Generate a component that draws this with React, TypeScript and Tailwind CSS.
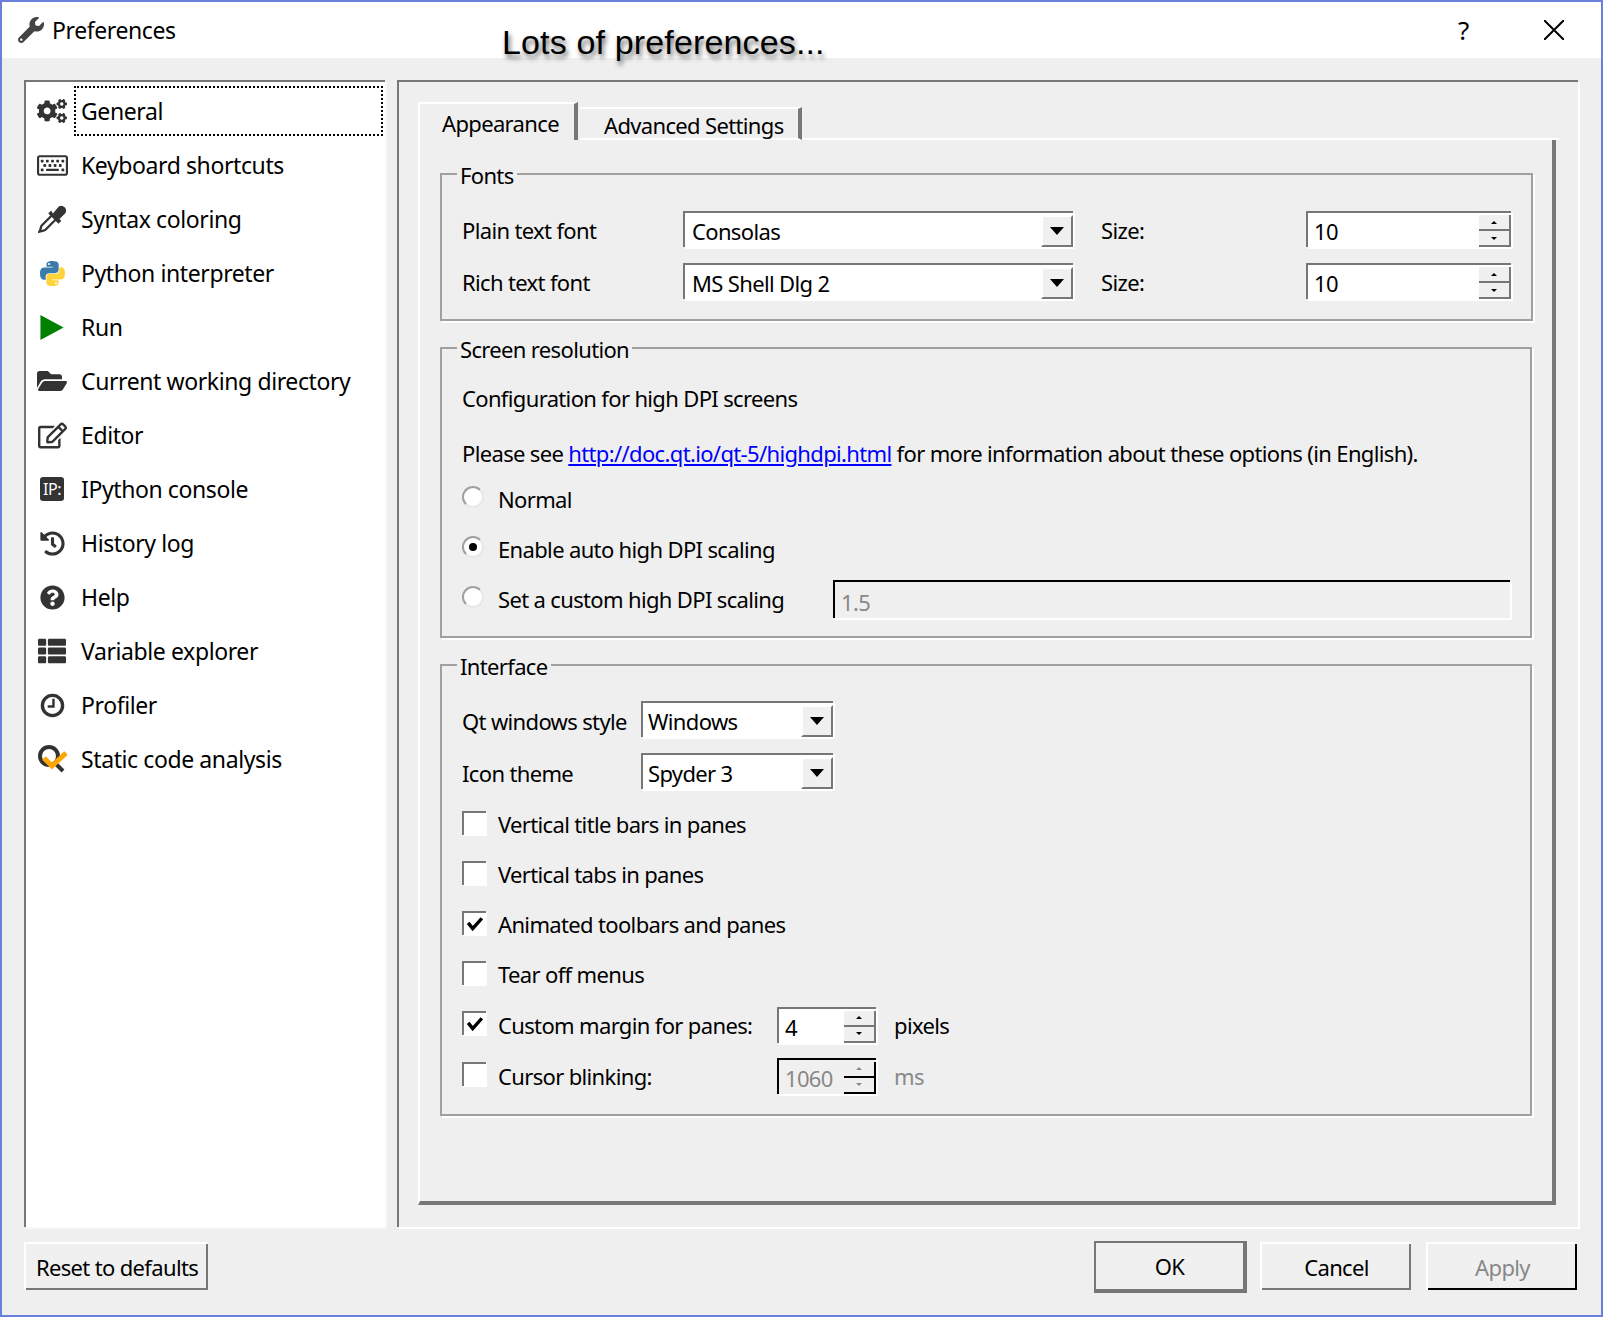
import type { ReactNode } from "react";
import {
  FaCogs,
  FaFolderOpen,
  FaHistory,
  FaQuestionCircle,
  FaRegEdit,
  FaRegKeyboard,
  FaThList,
  FaWrench,
} from "react-icons/fa";

function PythonIcon() {
  const d =
    "M54.9 0C26.9 0 28.6 12.2 28.6 12.2v12.6h26.7v3.8H18C18 28.6 0 26.5 0 54.9c0 28.4 15.7 27.4 15.7 27.4h9.4V69.1s-.5-15.7 15.4-15.7h26.6s14.9.2 14.9-14.4V14.8S84.3 0 54.9 0zM40.1 8.5a4.8 4.8 0 110 9.6 4.8 4.8 0 010-9.6z";
  return (
    <svg viewBox="0 0 110 110" className="h-[25px] w-[25px]">
      <path d={d} fill="#3d7bab" />
      <path d={d} fill="#ffd43b" transform="rotate(180 55 55)" />
    </svg>
  );
}

function RunIcon() {
  return (
    <svg viewBox="0 0 24 26" className="h-[25px] w-[24px]">
      <polygon points="0,0 24,13 0,26" fill="#008000" />
    </svg>
  );
}

function DropperIcon() {
  return (
    <svg viewBox="0 0 30 30" className="h-[28px] w-[28px]">
      <path d="M16 9l6-7a5 5 0 017 7l-6 6 2 2-3 3L11 9l3-3z" fill="#333" />
      <path d="M15 11L4 22c-1 1-1 3-1.500 4.500L1.500 28.500 3.500 28c1.500-.5 3.500-.5 4.500-1.500L19 15.500" fill="none" stroke="#333" strokeWidth="2.500" />
    </svg>
  );
}

function ClockIcon() {
  return (
    <svg viewBox="0 0 26 26" className="h-[25px] w-[25px]">
      <circle cx="13" cy="13" r="10.500" fill="none" stroke="#333" strokeWidth="3.500" />
      <path d="M14 6v8H8" fill="none" stroke="#333" strokeWidth="2.500" />
    </svg>
  );
}

function IPythonIcon() {
  return (
    <span className="flex h-[24px] w-[24px] items-center justify-center rounded-[3px] bg-[#333] text-[16px] leading-none tracking-[-0.5px] text-white">
      IP:
    </span>
  );
}

function AnalysisIcon() {
  return (
    <svg viewBox="0 0 30 28" className="h-[28px] w-[30px]">
      <circle cx="12" cy="11" r="9" fill="none" stroke="#333" strokeWidth="4" />
      <path d="M18 18l8 8" stroke="#333" strokeWidth="4" />
      <path d="M7 13l8 8L29 8" fill="none" stroke="#ffa500" strokeWidth="5" />
    </svg>
  );
}

const iconCls = "text-[#333]";

const pages: { label: string; icon: ReactNode }[] = [
  { label: "General", icon: <FaCogs size={30} className={iconCls} /> },
  { label: "Keyboard shortcuts", icon: <FaRegKeyboard size={31} className={iconCls} /> },
  { label: "Syntax coloring", icon: <DropperIcon /> },
  { label: "Python interpreter", icon: <PythonIcon /> },
  { label: "Run", icon: <RunIcon /> },
  { label: "Current working directory", icon: <FaFolderOpen size={30} className={iconCls} /> },
  { label: "Editor", icon: <FaRegEdit size={29} className={iconCls} /> },
  { label: "IPython console", icon: <IPythonIcon /> },
  { label: "History log", icon: <FaHistory size={25} className={iconCls} /> },
  { label: "Help", icon: <FaQuestionCircle size={25} className={iconCls} /> },
  { label: "Variable explorer", icon: <FaThList size={28} className={iconCls} /> },
  { label: "Profiler", icon: <ClockIcon /> },
  { label: "Static code analysis", icon: <AnalysisIcon /> },
];

function Combo({ value, width, pad }: { value: string; width: string; pad: string }) {
  return (
    <div
      className={`flex h-[36px] items-center justify-between border-t-2 border-l-2 border-[#777] bg-white shadow-[2px_2px_0_#fff] ${width}`}
    >
      <span className={`pt-[2px] ${pad}`}>{value}</span>
      <span className="flex h-[32px] w-[32px] items-center justify-center self-end border-2 border-[#777] border-t-white border-l-white bg-[#f0f0f0]">
        <span className="h-0 w-0 border-x-[7px] border-t-[8px] border-x-transparent border-t-black" />
      </span>
    </div>
  );
}

function Spin({
  value,
  width,
  disabled = false,
  pad = "pl-[6px]",
}: {
  value: string;
  width: string;
  disabled?: boolean;
  pad?: string;
}) {
  const line = disabled ? "border-black" : "border-[#777]";
  const arrow = disabled ? "border-b-[#888]" : "border-b-black";
  const arrowDown = disabled ? "border-t-[#888]" : "border-t-black";
  return (
    <div
      className={`flex h-[36px] items-center justify-between border-t-2 border-l-2 ${line} ${
        disabled ? "bg-[#f0f0f0] text-[#888]" : "bg-white"
      } shadow-[2px_2px_0_#fff] ${width}`}
    >
      <span className={`pt-[2px] ${pad}`}>{value}</span>
      <span className={`flex h-[32px] w-[32px] flex-col self-end border-r-2 border-b-2 ${line}`}>
        <span className={`flex flex-1 items-center justify-center border-b-2 ${line} bg-[#f0f0f0]`}>
          <span className={`h-0 w-0 border-x-[3px] border-b-[3px] border-x-transparent ${arrow}`} />
        </span>
        <span className="flex flex-1 items-center justify-center bg-[#f0f0f0]">
          <span className={`h-0 w-0 border-x-[3px] border-t-[3px] border-x-transparent ${arrowDown}`} />
        </span>
      </span>
    </div>
  );
}

function Radio({ checked = false }: { checked?: boolean }) {
  return (
    <span className="mb-[4px] flex h-[22px] w-[22px] items-center justify-center rounded-full border-2 border-[#a0a0a0] border-r-[#e8e8e8] border-b-[#e8e8e8] bg-white">
      {checked && <span className="h-[8px] w-[8px] rounded-full bg-black" />}
    </span>
  );
}

function Check({ checked = false }: { checked?: boolean }) {
  return (
    <span className="mb-[3px] flex h-[24px] w-[24px] items-center justify-center border-t-2 border-l-2 border-[#777] bg-white shadow-[1px_1px_0_#fff]">
      {checked && (
        <svg viewBox="0 0 14 12" className="h-[14px] w-[16px]">
          <path d="M1 5l4 5 8-9" fill="none" stroke="black" strokeWidth="3" />
        </svg>
      )}
    </span>
  );
}

function Group({ title, className, children }: { title: string; className: string; children: ReactNode }) {
  return (
    <fieldset className={`border-2 border-[#a0a0a0] px-[20px] shadow-[2px_2px_0_#fff] ${className}`}>
      <legend className="ml-[-5px] translate-y-[1px] px-[3px] leading-[28px]">{title}</legend>
      {children}
    </fieldset>
  );
}

function CheckRow({ label, checked = false }: { label: string; checked?: boolean }) {
  return (
    <div className="flex h-[50px] items-center gap-[12px]">
      <Check checked={checked} />
      <span>{label}</span>
    </div>
  );
}

function RadioRow({ label, checked = false, children }: { label: string; checked?: boolean; children?: ReactNode }) {
  return (
    <div className="flex h-[50px] items-center gap-[14px]">
      <Radio checked={checked} />
      <span className="w-[321px] whitespace-nowrap">{label}</span>
      {children}
    </div>
  );
}

export default function App() {
  return (
    <div className="relative flex h-[1317px] w-[1603px] flex-col overflow-hidden border-2 border-[#6b7fdc] bg-[#efefef] font-['Noto_Sans',sans-serif] text-[23px] leading-[28px] tracking-[-0.4px] text-black">
      {/* title bar */}
      <div className="flex h-[56px] shrink-0 items-center bg-white pl-[16px] pr-[37px]">
        <FaWrench size={26} className="text-[#444]" />
        <span className="ml-[8px] flex-1">Preferences</span>
        <span className="mr-[75px] text-[26px]">?</span>
        <svg viewBox="0 0 20 20" className="h-[20px] w-[20px]">
          <path d="M0 0L20 20M20 0L0 20" stroke="black" strokeWidth="2" />
        </svg>
      </div>
      <div className="pointer-events-none absolute left-[500px] top-[20px] font-['Liberation_Sans',sans-serif] text-[34px] leading-[40px] tracking-[0.15px] [text-shadow:2px_4px_5px_rgba(0,0,0,0.6)]">
        Lots of preferences...
      </div>

      {/* body */}
      <div className="flex flex-1 gap-[12px] pl-[22px] pr-[23px] pt-[22px]">
        <div className="h-[1147px] w-[361px] border-t-2 border-l-2 border-[#777] bg-white pt-[2px] shadow-[2px_2px_0_#f8f8f8]">
          {pages.map((page, i) => (
            <div key={page.label} className="flex h-[54px] items-center">
              <span className="flex w-[47px] shrink-0 items-center justify-center pr-[1px] pl-[6px]">{page.icon}</span>
              <span
                className={`flex h-[50px] flex-1 items-center pl-[5px] ${
                  i === 0 ? "mr-[2px] ml-[1px] border-2 border-dotted border-black" : "ml-[3px]"
                }`}
              >
                {page.label}
              </span>
            </div>
          ))}
        </div>

        <div className="h-[1147px] flex-1 border-t-2 border-l-2 border-[#777] px-[19px] pt-[20px] text-[22px] tracking-[-0.65px] shadow-[2px_2px_0_#fff]">
          {/* tabs */}
          <div className="flex h-[38px] items-end">
            <div className="flex h-[38px] w-[160px] items-center border-t-2 border-l-2 border-r-4 border-white border-r-[#777] pl-[22px] pt-[2px]">
              Appearance
            </div>
            <div className="ml-[2px] flex h-[33px] w-[222px] items-center whitespace-nowrap border-t-2 border-r-4 border-b-2 border-white border-r-[#777] pl-[24px] pt-[3px]">
              Advanced Settings
            </div>
            <div className="h-[2px] flex-1 bg-white" />
          </div>
          <div className="h-[1065px] w-[1138px] border-r-4 border-b-4 border-l-2 border-[#777] border-l-white px-[20px] pt-[20px]">
            <Group title="Fonts" className="h-[161px]">
              <div className="mt-[10px] flex h-[52px] items-center pt-[10px]">
                <span className="w-[221px] pt-[1px]">Plain text font</span>
                <Combo value="Consolas" width="w-[390px]" pad="pl-[7px]" />
                <span className="ml-[28px] w-[205px] pt-[1px]">Size:</span>
                <Spin value="10" width="w-[205px]" />
              </div>
              <div className="flex h-[52px] items-center pt-[10px]">
                <span className="w-[221px] pt-[1px]">Rich text font</span>
                <Combo value="MS Shell Dlg 2" width="w-[390px]" pad="pl-[7px]" />
                <span className="ml-[28px] w-[205px] pt-[1px]">Size:</span>
                <Spin value="10" width="w-[205px]" />
              </div>
            </Group>

            <Group title="Screen resolution" className="mt-[13px] h-[304px]">
              <p className="mt-[22px]">Configuration for high DPI screens</p>
              <p className="mt-[27px] whitespace-nowrap">
                Please see <span className="text-[#0000ff] underline">http://doc.qt.io/qt-5/highdpi.html</span> for more
                information about these options (in English).
              </p>
              <div className="mt-[7px]">
                <RadioRow label="Normal" />
                <RadioRow label="Enable auto high DPI scaling" checked />
                <RadioRow label="Set a custom high DPI scaling">
                  <span className="flex h-[38px] flex-1 items-center border-t-2 border-l-2 border-black pl-[6px] pt-[3px] text-[#888] shadow-[2px_2px_0_#fff]">
                    1.5
                  </span>
                </RadioRow>
              </div>
            </Group>

            <Group title="Interface" className="mt-[13px] h-[465px]">
              <div className="mt-[10px] flex h-[52px] items-center pt-[8px]">
                <span className="w-[179px] whitespace-nowrap pt-[3px]">Qt windows style</span>
                <Combo value="Windows" width="w-[192px]" pad="pl-[5px]" />
              </div>
              <div className="mb-[6px] flex h-[52px] items-center pt-[8px]">
                <span className="w-[179px] pt-[3px]">Icon theme</span>
                <Combo value="Spyder 3" width="w-[192px]" pad="pl-[5px]" />
              </div>
              <CheckRow label="Vertical title bars in panes" />
              <CheckRow label="Vertical tabs in panes" />
              <CheckRow label="Animated toolbars and panes" checked />
              <CheckRow label="Tear off menus" />
              <div className="flex h-[51px] items-center">
                <span className="flex w-[315px] items-center gap-[12px] whitespace-nowrap">
                  <Check checked />
                  <span>Custom margin for panes:</span>
                </span>
                <Spin value="4" width="w-[99px]" />
                <span className="ml-[18px]">pixels</span>
              </div>
              <div className="flex h-[51px] items-center">
                <span className="flex w-[315px] items-center gap-[12px]">
                  <Check />
                  <span>Cursor blinking:</span>
                </span>
                <Spin value="1060" width="w-[99px]" disabled />
                <span className="ml-[18px] text-[#888]">ms</span>
              </div>
            </Group>
          </div>
        </div>
      </div>

      {/* footer */}
      <div className="mb-[25px] flex h-[48px] shrink-0 items-stretch gap-[13px] pl-[22px] pr-[24px] text-[22px] tracking-[-0.65px]">
        <button className="mr-auto w-[184px] whitespace-nowrap border-t-2 border-l-2 border-white bg-[#f0f0f0] shadow-[inset_-2px_-2px_0_#777]">
          Reset to defaults
        </button>
        <button className="mt-[-1px] mb-[-3px] w-[153px] border-2 border-r-4 border-b-4 border-[#777] bg-[#f0f0f0]">
          OK
        </button>
        <button className="w-[151px] border-t-2 border-l-2 border-white bg-[#f0f0f0] shadow-[inset_-2px_-2px_0_#777]">
          Cancel
        </button>
        <button className="ml-[2px] w-[151px] border-t-2 border-l-2 border-white bg-[#f0f0f0] text-[#888] shadow-[inset_-2px_-2px_0_#000]">
          Apply
        </button>
      </div>
    </div>
  );
}
